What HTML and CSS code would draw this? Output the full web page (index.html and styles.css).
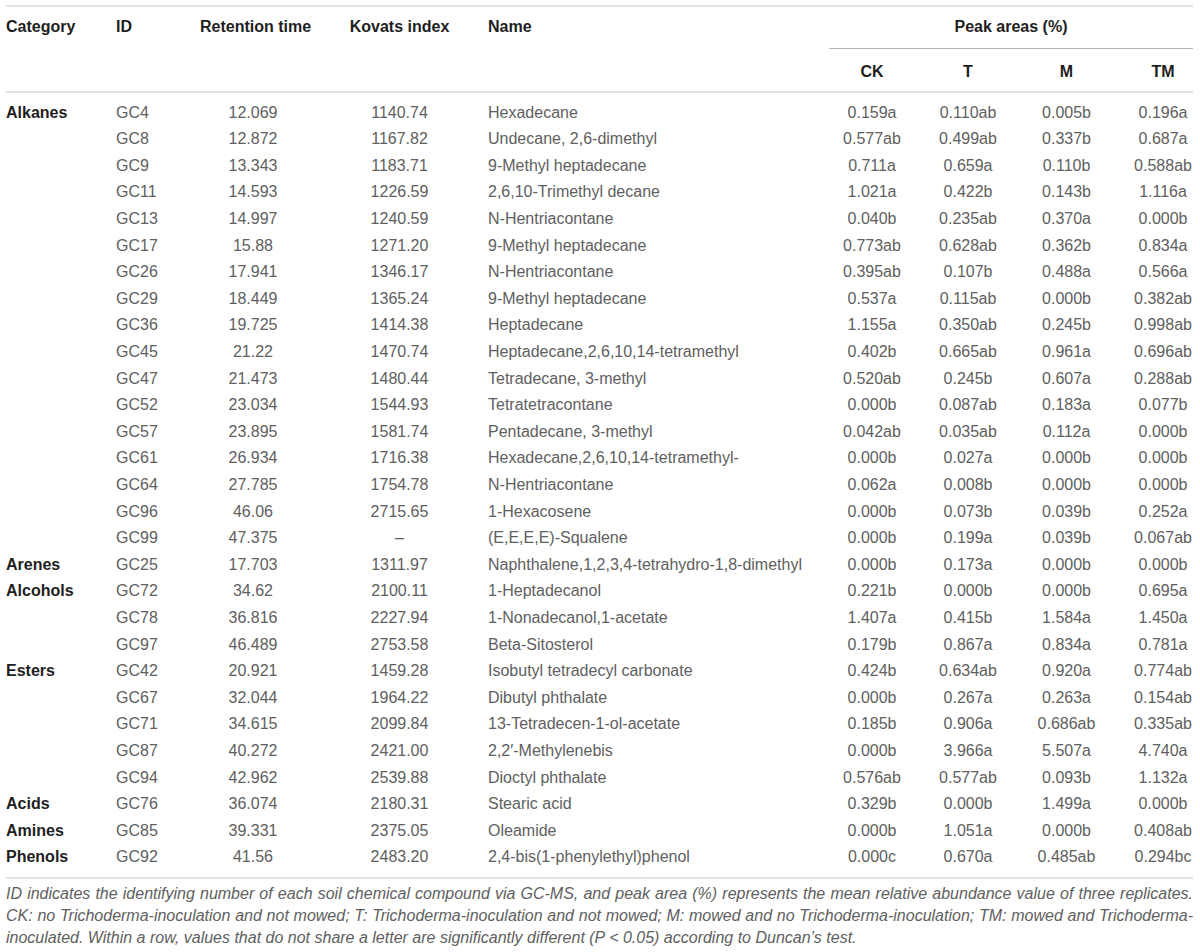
FILE: index.html
```html
<!DOCTYPE html>
<html lang="en">
<head>
<meta charset="utf-8">
<title>Soil chemical compounds</title>
<link rel="stylesheet" href="styles.css">
</head>
<body>
<div class="wrap">
<table class="data">
  <colgroup>
    <col class="c-cat"><col class="c-id"><col class="c-rt"><col class="c-ki"><col class="c-name">
    <col class="c-ck"><col class="c-t"><col class="c-m"><col class="c-tm">
  </colgroup>
  <thead>
    <tr>
      <th rowspan="2" class="h-left">Category</th>
      <th rowspan="2" class="h-left">ID</th>
      <th rowspan="2" class="h-mid rt">Retention time</th>
      <th rowspan="2" class="h-mid ki">Kovats index</th>
      <th rowspan="2" class="h-left">Name</th>
      <th colspan="4" class="peak">Peak areas (%)</th>
    </tr>
    <tr class="sub">
      <th class="ck">CK</th><th class="t">T</th><th class="m">M</th><th class="tm">TM</th>
    </tr>
  </thead>
  <tbody>
    <tr><th rowspan="17" class="cat">Alkanes</th><td>GC4</td><td class="rt">12.069</td><td class="ki">1140.74</td><td>Hexadecane</td><td class="ck">0.159a</td><td class="t">0.110ab</td><td class="m">0.005b</td><td class="tm">0.196a</td></tr>
    <tr><td>GC8</td><td class="rt">12.872</td><td class="ki">1167.82</td><td>Undecane, 2,6-dimethyl</td><td class="ck">0.577ab</td><td class="t">0.499ab</td><td class="m">0.337b</td><td class="tm">0.687a</td></tr>
    <tr><td>GC9</td><td class="rt">13.343</td><td class="ki">1183.71</td><td>9-Methyl heptadecane</td><td class="ck">0.711a</td><td class="t">0.659a</td><td class="m">0.110b</td><td class="tm">0.588ab</td></tr>
    <tr><td>GC11</td><td class="rt">14.593</td><td class="ki">1226.59</td><td>2,6,10-Trimethyl decane</td><td class="ck">1.021a</td><td class="t">0.422b</td><td class="m">0.143b</td><td class="tm">1.116a</td></tr>
    <tr><td>GC13</td><td class="rt">14.997</td><td class="ki">1240.59</td><td>N-Hentriacontane</td><td class="ck">0.040b</td><td class="t">0.235ab</td><td class="m">0.370a</td><td class="tm">0.000b</td></tr>
    <tr><td>GC17</td><td class="rt">15.88</td><td class="ki">1271.20</td><td>9-Methyl heptadecane</td><td class="ck">0.773ab</td><td class="t">0.628ab</td><td class="m">0.362b</td><td class="tm">0.834a</td></tr>
    <tr><td>GC26</td><td class="rt">17.941</td><td class="ki">1346.17</td><td>N-Hentriacontane</td><td class="ck">0.395ab</td><td class="t">0.107b</td><td class="m">0.488a</td><td class="tm">0.566a</td></tr>
    <tr><td>GC29</td><td class="rt">18.449</td><td class="ki">1365.24</td><td>9-Methyl heptadecane</td><td class="ck">0.537a</td><td class="t">0.115ab</td><td class="m">0.000b</td><td class="tm">0.382ab</td></tr>
    <tr><td>GC36</td><td class="rt">19.725</td><td class="ki">1414.38</td><td>Heptadecane</td><td class="ck">1.155a</td><td class="t">0.350ab</td><td class="m">0.245b</td><td class="tm">0.998ab</td></tr>
    <tr><td>GC45</td><td class="rt">21.22</td><td class="ki">1470.74</td><td>Heptadecane,2,6,10,14-tetramethyl</td><td class="ck">0.402b</td><td class="t">0.665ab</td><td class="m">0.961a</td><td class="tm">0.696ab</td></tr>
    <tr><td>GC47</td><td class="rt">21.473</td><td class="ki">1480.44</td><td>Tetradecane, 3-methyl</td><td class="ck">0.520ab</td><td class="t">0.245b</td><td class="m">0.607a</td><td class="tm">0.288ab</td></tr>
    <tr><td>GC52</td><td class="rt">23.034</td><td class="ki">1544.93</td><td>Tetratetracontane</td><td class="ck">0.000b</td><td class="t">0.087ab</td><td class="m">0.183a</td><td class="tm">0.077b</td></tr>
    <tr><td>GC57</td><td class="rt">23.895</td><td class="ki">1581.74</td><td>Pentadecane, 3-methyl</td><td class="ck">0.042ab</td><td class="t">0.035ab</td><td class="m">0.112a</td><td class="tm">0.000b</td></tr>
    <tr><td>GC61</td><td class="rt">26.934</td><td class="ki">1716.38</td><td>Hexadecane,2,6,10,14-tetramethyl-</td><td class="ck">0.000b</td><td class="t">0.027a</td><td class="m">0.000b</td><td class="tm">0.000b</td></tr>
    <tr><td>GC64</td><td class="rt">27.785</td><td class="ki">1754.78</td><td>N-Hentriacontane</td><td class="ck">0.062a</td><td class="t">0.008b</td><td class="m">0.000b</td><td class="tm">0.000b</td></tr>
    <tr><td>GC96</td><td class="rt">46.06</td><td class="ki">2715.65</td><td>1-Hexacosene</td><td class="ck">0.000b</td><td class="t">0.073b</td><td class="m">0.039b</td><td class="tm">0.252a</td></tr>
    <tr><td>GC99</td><td class="rt">47.375</td><td class="ki">–</td><td>(E,E,E,E)-Squalene</td><td class="ck">0.000b</td><td class="t">0.199a</td><td class="m">0.039b</td><td class="tm">0.067ab</td></tr>
    <tr><th class="cat">Arenes</th><td>GC25</td><td class="rt">17.703</td><td class="ki">1311.97</td><td>Naphthalene,1,2,3,4-tetrahydro-1,8-dimethyl</td><td class="ck">0.000b</td><td class="t">0.173a</td><td class="m">0.000b</td><td class="tm">0.000b</td></tr>
    <tr><th rowspan="3" class="cat">Alcohols</th><td>GC72</td><td class="rt">34.62</td><td class="ki">2100.11</td><td>1-Heptadecanol</td><td class="ck">0.221b</td><td class="t">0.000b</td><td class="m">0.000b</td><td class="tm">0.695a</td></tr>
    <tr><td>GC78</td><td class="rt">36.816</td><td class="ki">2227.94</td><td>1-Nonadecanol,1-acetate</td><td class="ck">1.407a</td><td class="t">0.415b</td><td class="m">1.584a</td><td class="tm">1.450a</td></tr>
    <tr><td>GC97</td><td class="rt">46.489</td><td class="ki">2753.58</td><td>Beta-Sitosterol</td><td class="ck">0.179b</td><td class="t">0.867a</td><td class="m">0.834a</td><td class="tm">0.781a</td></tr>
    <tr><th rowspan="5" class="cat">Esters</th><td>GC42</td><td class="rt">20.921</td><td class="ki">1459.28</td><td>Isobutyl tetradecyl carbonate</td><td class="ck">0.424b</td><td class="t">0.634ab</td><td class="m">0.920a</td><td class="tm">0.774ab</td></tr>
    <tr><td>GC67</td><td class="rt">32.044</td><td class="ki">1964.22</td><td>Dibutyl phthalate</td><td class="ck">0.000b</td><td class="t">0.267a</td><td class="m">0.263a</td><td class="tm">0.154ab</td></tr>
    <tr><td>GC71</td><td class="rt">34.615</td><td class="ki">2099.84</td><td>13-Tetradecen-1-ol-acetate</td><td class="ck">0.185b</td><td class="t">0.906a</td><td class="m">0.686ab</td><td class="tm">0.335ab</td></tr>
    <tr><td>GC87</td><td class="rt">40.272</td><td class="ki">2421.00</td><td>2,2′-Methylenebis</td><td class="ck">0.000b</td><td class="t">3.966a</td><td class="m">5.507a</td><td class="tm">4.740a</td></tr>
    <tr><td>GC94</td><td class="rt">42.962</td><td class="ki">2539.88</td><td>Dioctyl phthalate</td><td class="ck">0.576ab</td><td class="t">0.577ab</td><td class="m">0.093b</td><td class="tm">1.132a</td></tr>
    <tr><th class="cat">Acids</th><td>GC76</td><td class="rt">36.074</td><td class="ki">2180.31</td><td>Stearic acid</td><td class="ck">0.329b</td><td class="t">0.000b</td><td class="m">1.499a</td><td class="tm">0.000b</td></tr>
    <tr><th class="cat">Amines</th><td>GC85</td><td class="rt">39.331</td><td class="ki">2375.05</td><td>Oleamide</td><td class="ck">0.000b</td><td class="t">1.051a</td><td class="m">0.000b</td><td class="tm">0.408ab</td></tr>
    <tr><th class="cat">Phenols</th><td>GC92</td><td class="rt">41.56</td><td class="ki">2483.20</td><td>2,4-bis(1-phenylethyl)phenol</td><td class="ck">0.000c</td><td class="t">0.670a</td><td class="m">0.485ab</td><td class="tm">0.294bc</td></tr>
  </tbody>
</table>
<p class="note">
  <span class="ln">ID indicates the identifying number of each soil chemical compound via GC-MS, and peak area (%) represents the mean relative abundance value of three replicates.</span>
  <span class="ln">CK: no Trichoderma-inoculation and not mowed; T: Trichoderma-inoculation and not mowed; M: mowed and no Trichoderma-inoculation; TM: mowed and Trichoderma-</span>
  <span class="ln last">inoculated. Within a row, values that do not share a letter are significantly different (P &lt; 0.05) according to Duncan’s test.</span>
</p>
</div>
</body>
</html>
```
FILE: styles.css
```css
* { box-sizing: border-box; }

body {
  margin: 0;
  background: #ffffff;
  font-family: "Liberation Sans", Arial, Helvetica, sans-serif;
  color: #606060;
}

.wrap {
  width: 1200px;
  padding: 5px 7px 0 6px;
}

.data {
  width: 1187px;
  table-layout: fixed;
  border-collapse: separate;
  border-spacing: 0;
  border-top: 2px solid #e2e2e2;
  font-size: 16px;
}

.c-cat { width: 110px; }
.c-id { width: 84px; }
.c-rt { width: 106px; }
.c-ki { width: 182px; }
.c-name { width: 341px; }
.c-ck { width: 89px; }
.c-t { width: 100px; }
.c-m { width: 97px; }
.c-tm { width: 78px; }

th {
  font-weight: bold;
  color: #1e1e1e;
  text-align: left;
  vertical-align: top;
  white-space: nowrap;
}

thead th {
  line-height: 20px;
  padding: 10px 0 11px;
}

thead th[rowspan] {
  border-bottom: 2px solid #e2e2e2;
}

thead .peak {
  text-align: center;
  border-bottom: 1px solid #b4b4b4;
}

thead .sub th {
  padding: 13px 0 9px;
  border-bottom: 2px solid #e2e2e2;
}

td {
  padding: 0;
  line-height: 26.6px;
  white-space: nowrap;
  vertical-align: top;
}

tbody th.cat {
  line-height: 26.6px;
  padding: 0;
}

tbody tr:first-child > * { padding-top: 6.7px; }

tbody tr:last-child > * {
  padding-bottom: 6px;
  border-bottom: 2px solid #e2e2e2;
}

.rt, .ki, .ck, .t, .m, .tm { text-align: center; }
.ki { padding-left: 5px; }
.ck { padding-right: 3px; }
.tm { padding-left: 18px; }

thead .sub th.ck { padding-right: 3px; }
thead .sub th.tm { padding-left: 18px; }
thead th.ki { padding-left: 5px; }

.note {
  margin: 4px 0 0;
  width: 1187px;
  font-style: italic;
  font-size: 16px;
  line-height: 22px;
  color: #606060;
}

.note .ln {
  display: block;
  text-align: justify;
  text-align-last: justify;
  white-space: nowrap;
}

.note .ln.last {
  text-align-last: left;
}
```
